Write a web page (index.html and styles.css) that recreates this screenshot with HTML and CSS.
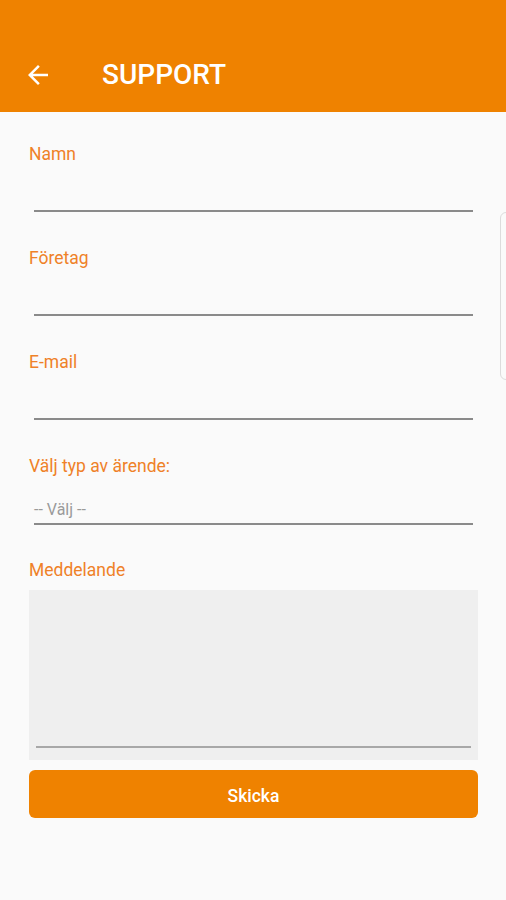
FILE: index.html
```html
<!DOCTYPE html>
<html lang="sv">
<head>
  <meta charset="UTF-8">
  <title>Support</title>
  <link rel="stylesheet" href="styles.css">
</head>
<body>

  <header class="topbar">
    <svg class="back" width="30" height="30" viewBox="0 0 24 24">
      <path d="M20 11H7.83l5.59-5.59L12 4l-8 8 8 8 1.41-1.41L7.83 13H20v-2z" fill="#fff"/>
    </svg>
    <h1>SUPPORT</h1>
  </header>

  <main class="form">
    <div class="field">
      <label>Namn</label>
      <div class="line"></div>
    </div>
    <div class="field">
      <label>Företag</label>
      <div class="line"></div>
    </div>
    <div class="field">
      <label>E-mail</label>
      <div class="line"></div>
    </div>
    <div class="field">
      <label>Välj typ av ärende:</label>
      <div class="line select">-- Välj --</div>
    </div>
    <div class="field msg">
      <label>Meddelande</label>
      <div class="textarea"><div class="line"></div></div>
    </div>
    <button class="send">Skicka</button>
  </main>

  <div class="edge"></div>

</body>
</html>
```

FILE: styles.css
```css
body {
  margin: 0;
  background: #fafafa;
  font-family: Roboto, "Noto Sans", Arial, sans-serif;
  width: 506px;
  height: 900px;
  overflow: hidden;
  position: relative;
}

.topbar {
  height: 112px;
  background: #ef8200;
  display: flex;
  align-items: flex-end;
  padding: 0 0 22px 23px;
  box-sizing: border-box;
}

.back {
  margin-bottom: 0;
}

.topbar h1 {
  margin: 0 0 0 49px;
  color: #fff;
  font-size: 28px;
  font-weight: 500;
  line-height: 30px;
}

.form {
  padding: 32px 28px 0 29px;
}

.field {
  height: 104px;
}

.field label {
  display: block;
  color: #ef8128;
  font-size: 17.5px;
  line-height: 20px;
}

.field .line {
  margin: 26px 5px 0 5px;
  height: 20px;
  border-bottom: 2px solid #8a8a8a;
}

.field .select {
  color: #9a9a9a;
  font-size: 16px;
  line-height: 18px;
  margin-top: 25px;
  height: 18px;
  padding-bottom: 4px;
}

.field.msg {
  height: auto;
}

.textarea {
  margin-top: 10px;
  height: 170px;
  background: #efefef;
  box-sizing: border-box;
  padding-top: 156px;
}

.textarea .line {
  margin: 0 7px;
  height: 0;
  border-bottom: 2px solid #a8a8a8;
}

.send {
  display: block;
  width: 100%;
  margin-top: 10px;
  height: 48px;
  padding-top: 5px;
  border: none;
  border-radius: 6px;
  background: #ef8200;
  color: #fff;
  font-family: Roboto, Arial, sans-serif;
  font-size: 17.5px;
  font-weight: 500;
}

.edge {
  position: absolute;
  left: 500px;
  top: 212px;
  width: 12px;
  height: 166px;
  border: 1px solid #dcdcdc;
  border-radius: 6px;
  background: #fafafa;
}
```
